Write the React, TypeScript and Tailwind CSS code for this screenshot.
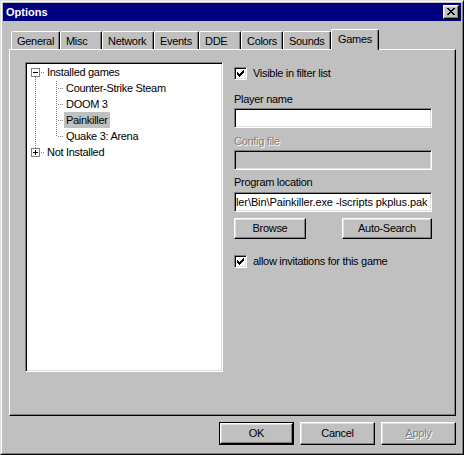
import React from "react";

const raised =
  "border border-t-white border-l-white border-r-black border-b-black shadow-[inset_-1px_-1px_0_#808080,inset_1px_1px_0_#dfdfdf]";
const sunken =
  "border border-t-[#808080] border-l-[#808080] border-r-white border-b-white shadow-[inset_1px_1px_0_#000,inset_-1px_-1px_0_#dfdfdf]";
const disabledText = "text-[#808080] [text-shadow:1px_1px_0_#fff]";

function vDots(x: number, y0: number, y1: number, key: string) {
  const out: React.ReactElement[] = [];
  for (let y = y0; y <= y1; y += 2) out.push(<rect key={key + y} x={x} y={y} width={1} height={1} fill="#808080" />);
  return out;
}
function hDots(y: number, x0: number, x1: number, key: string) {
  const out: React.ReactElement[] = [];
  for (let x = x0; x <= x1; x += 2) out.push(<rect key={key + x} x={x} y={y} width={1} height={1} fill="#808080" />);
  return out;
}

function ExpandBox({ plus }: { plus: boolean }) {
  return (
    <g>
      <rect x={4.5} y={4.5} width={8} height={8} fill="#fff" stroke="#808080" strokeWidth={1} shapeRendering="crispEdges" />
      <rect x={6} y={8} width={5} height={1} fill="#000" />
      {plus && <rect x={8} y={6} width={1} height={5} fill="#000" />}
    </g>
  );
}

function RootRow({ label, plus, above, below }: { label: string; plus: boolean; above: boolean; below: boolean }) {
  return (
    <div className="flex h-[16px] items-center">
      <svg width={18} height={16} className="shrink-0" shapeRendering="crispEdges">
        {above && vDots(8, 1, 3, "a")}
        <ExpandBox plus={plus} />
        {hDots(8, 14, 16, "h")}
        {below && vDots(8, 13, 15, "b")}
      </svg>
      <span className="px-[2px] leading-[16px] whitespace-nowrap">{label}</span>
    </div>
  );
}

function ChildRow({ label, last, selected }: { label: string; last?: boolean; selected?: boolean }) {
  return (
    <div className="flex h-[16px] items-center">
      <svg width={37} height={16} className="shrink-0" shapeRendering="crispEdges">
        {vDots(8, 1, 15, "r")}
        {vDots(29, 1, last ? 7 : 15, "c")}
        {hDots(8, 31, 35, "h")}
      </svg>
      <span className={"px-[2px] h-[16px] leading-[16px] whitespace-nowrap " + (selected ? "bg-[#c0c0c0]" : "")}>
        {label}
      </span>
    </div>
  );
}

function CheckBox() {
  return (
    <div className={"w-[13px] h-[13px] bg-white shrink-0 " + sunken}>
      <svg width={11} height={11} shapeRendering="crispEdges">
        {[
          [2, 4],
          [3, 5],
          [4, 6],
          [5, 5],
          [6, 4],
          [7, 3],
          [8, 2],
        ].map(([x, y]) => (
          <rect key={x} x={x} y={y} width={1} height={3} fill="#000" />
        ))}
      </svg>
    </div>
  );
}

function Tab({ label, w, selected }: { label: string; w: number; selected?: boolean }) {
  if (selected) {
    return (
      <div
        style={{ width: w }}
        className="relative z-10 h-[21px] -mb-[1px] bg-[#c0c0c0] border-l border-t border-r border-t-white border-l-white border-r-black shadow-[inset_-1px_0_0_#808080] rounded-t-[2px] pl-[6px] pt-[2px] leading-[14px] whitespace-nowrap"
      >
        {label}
      </div>
    );
  }
  return (
    <div
      style={{ width: w }}
      className="h-[18px] bg-[#c0c0c0] border-l border-t border-r border-t-white border-l-white border-r-black shadow-[inset_-1px_0_0_#808080] rounded-t-[2px] pl-[5px] pt-[2px] leading-[14px] whitespace-nowrap"
    >
      {label}
    </div>
  );
}

export default function App() {
  return (
    <div className="w-[464px] h-[455px] bg-[#c0c0c0] text-black font-['Liberation_Sans',Arial,sans-serif] text-[11px] tracking-[-0.3px] border border-t-[#dfdfdf] border-l-[#dfdfdf] border-r-black border-b-black select-none">
      <div className="h-full border border-t-white border-l-white border-r-[#808080] border-b-[#808080] p-[1px] flex flex-col">
        {/* title bar */}
        <div className="h-[18px] bg-[#000080] flex items-center justify-between pl-[3px] pr-[2px] shrink-0">
          <span className="text-white font-bold tracking-normal leading-[18px]">Options</span>
          <div className={"w-[16px] h-[14px] bg-[#c0c0c0] flex items-center justify-center " + raised}>
            <svg width={8} height={7} shapeRendering="crispEdges" className="-mt-[1px]">
              <path
                d="M0 0h2v1H0z M6 0h2v1H6z M1 1h2v1H1z M5 1h2v1H5z M2 2h4v1H2z M3 3h2v1H3z M2 4h4v1H2z M1 5h2v1H1z M5 5h2v1H5z M0 6h2v1H0z M6 6h2v1H6z"
                fill="#000"
              />
            </svg>
          </div>
        </div>

        {/* tabs */}
        <div className="mt-[8px] ml-[8px] h-[20px] flex items-end shrink-0">
          <Tab label="General" w={49} />
          <Tab label="Misc" w={42} />
          <Tab label="Network" w={52} />
          <Tab label="Events" w={45} />
          <Tab label="DDE" w={42} />
          <Tab label="Colors" w={42} />
          <Tab label="Sounds" w={48} />
          <Tab label="Games" w={48} selected />
        </div>

        {/* panel */}
        <div className="ml-[6px] w-[447px] h-[367px] shrink-0 border border-t-white border-l-white border-r-black border-b-black shadow-[inset_-1px_-1px_0_#808080] flex items-start pl-[15px] pt-[12px]">
          {/* tree */}
          <div className={"w-[198px] h-[310px] bg-white overflow-hidden shrink-0 " + sunken}>
            <div className="flex flex-col pt-[1px] pl-[1px]">
              <RootRow label="Installed games" plus={false} above={false} below={true} />
              <ChildRow label="Counter-Strike Steam" />
              <ChildRow label="DOOM 3" />
              <ChildRow label="Painkiller" selected />
              <ChildRow label="Quake 3: Arena" last />
              <RootRow label="Not Installed" plus={true} above={true} below={false} />
            </div>
          </div>

          {/* right column */}
          <div className="ml-[11px] w-[198px] mt-[5px] flex flex-col">
            <div className="flex items-center h-[13px] gap-[6px]">
              <CheckBox />
              <span className="leading-[13px] whitespace-nowrap">Visible in filter list</span>
            </div>

            <div className="mt-[13px] h-[13px] leading-[13px]">Player name</div>
            <div className={"mt-[2px] h-[20px] bg-white " + sunken}></div>

            <div className={"mt-[7px] h-[13px] leading-[13px] " + disabledText}>Config file</div>
            <div className={"mt-[2px] h-[20px] bg-[#c0c0c0] " + sunken}></div>

            <div className="mt-[6px] h-[13px] leading-[13px]">Program location</div>
            <div className={"mt-[3px] h-[20px] bg-white overflow-hidden flex items-center pl-[1px] " + sunken}>
              <span className="whitespace-nowrap leading-[16px] tracking-[-0.1px]">
                ler\Bin\Painkiller.exe -lscripts pkplus.pak
              </span>
            </div>

            <div className="mt-[6px] flex justify-between">
              <div className={"w-[72px] h-[21px] flex items-center justify-center leading-[13px] " + raised}>Browse</div>
              <div className={"w-[90px] h-[21px] flex items-center justify-center leading-[13px] " + raised}>
                Auto-Search
              </div>
            </div>

            <div className="mt-[16px] flex items-center h-[13px] gap-[6px]">
              <CheckBox />
              <span className="leading-[13px] whitespace-nowrap">allow invitations for this game</span>
            </div>
          </div>
        </div>

        {/* bottom buttons */}
        <div className="mt-[6px] flex justify-end gap-[6px] pr-[5px] shrink-0">
          <div className="w-[75px] h-[23px] border border-black">
            <div className={"w-full h-full flex items-center justify-center leading-[13px] " + raised}>OK</div>
          </div>
          <div className={"w-[75px] h-[23px] flex items-center justify-center leading-[13px] " + raised}>Cancel</div>
          <div className={"w-[75px] h-[23px] flex items-center justify-center leading-[13px] " + raised}>
            <span className={disabledText}>
              <span className="underline">A</span>pply
            </span>
          </div>
        </div>
      </div>
    </div>
  );
}
